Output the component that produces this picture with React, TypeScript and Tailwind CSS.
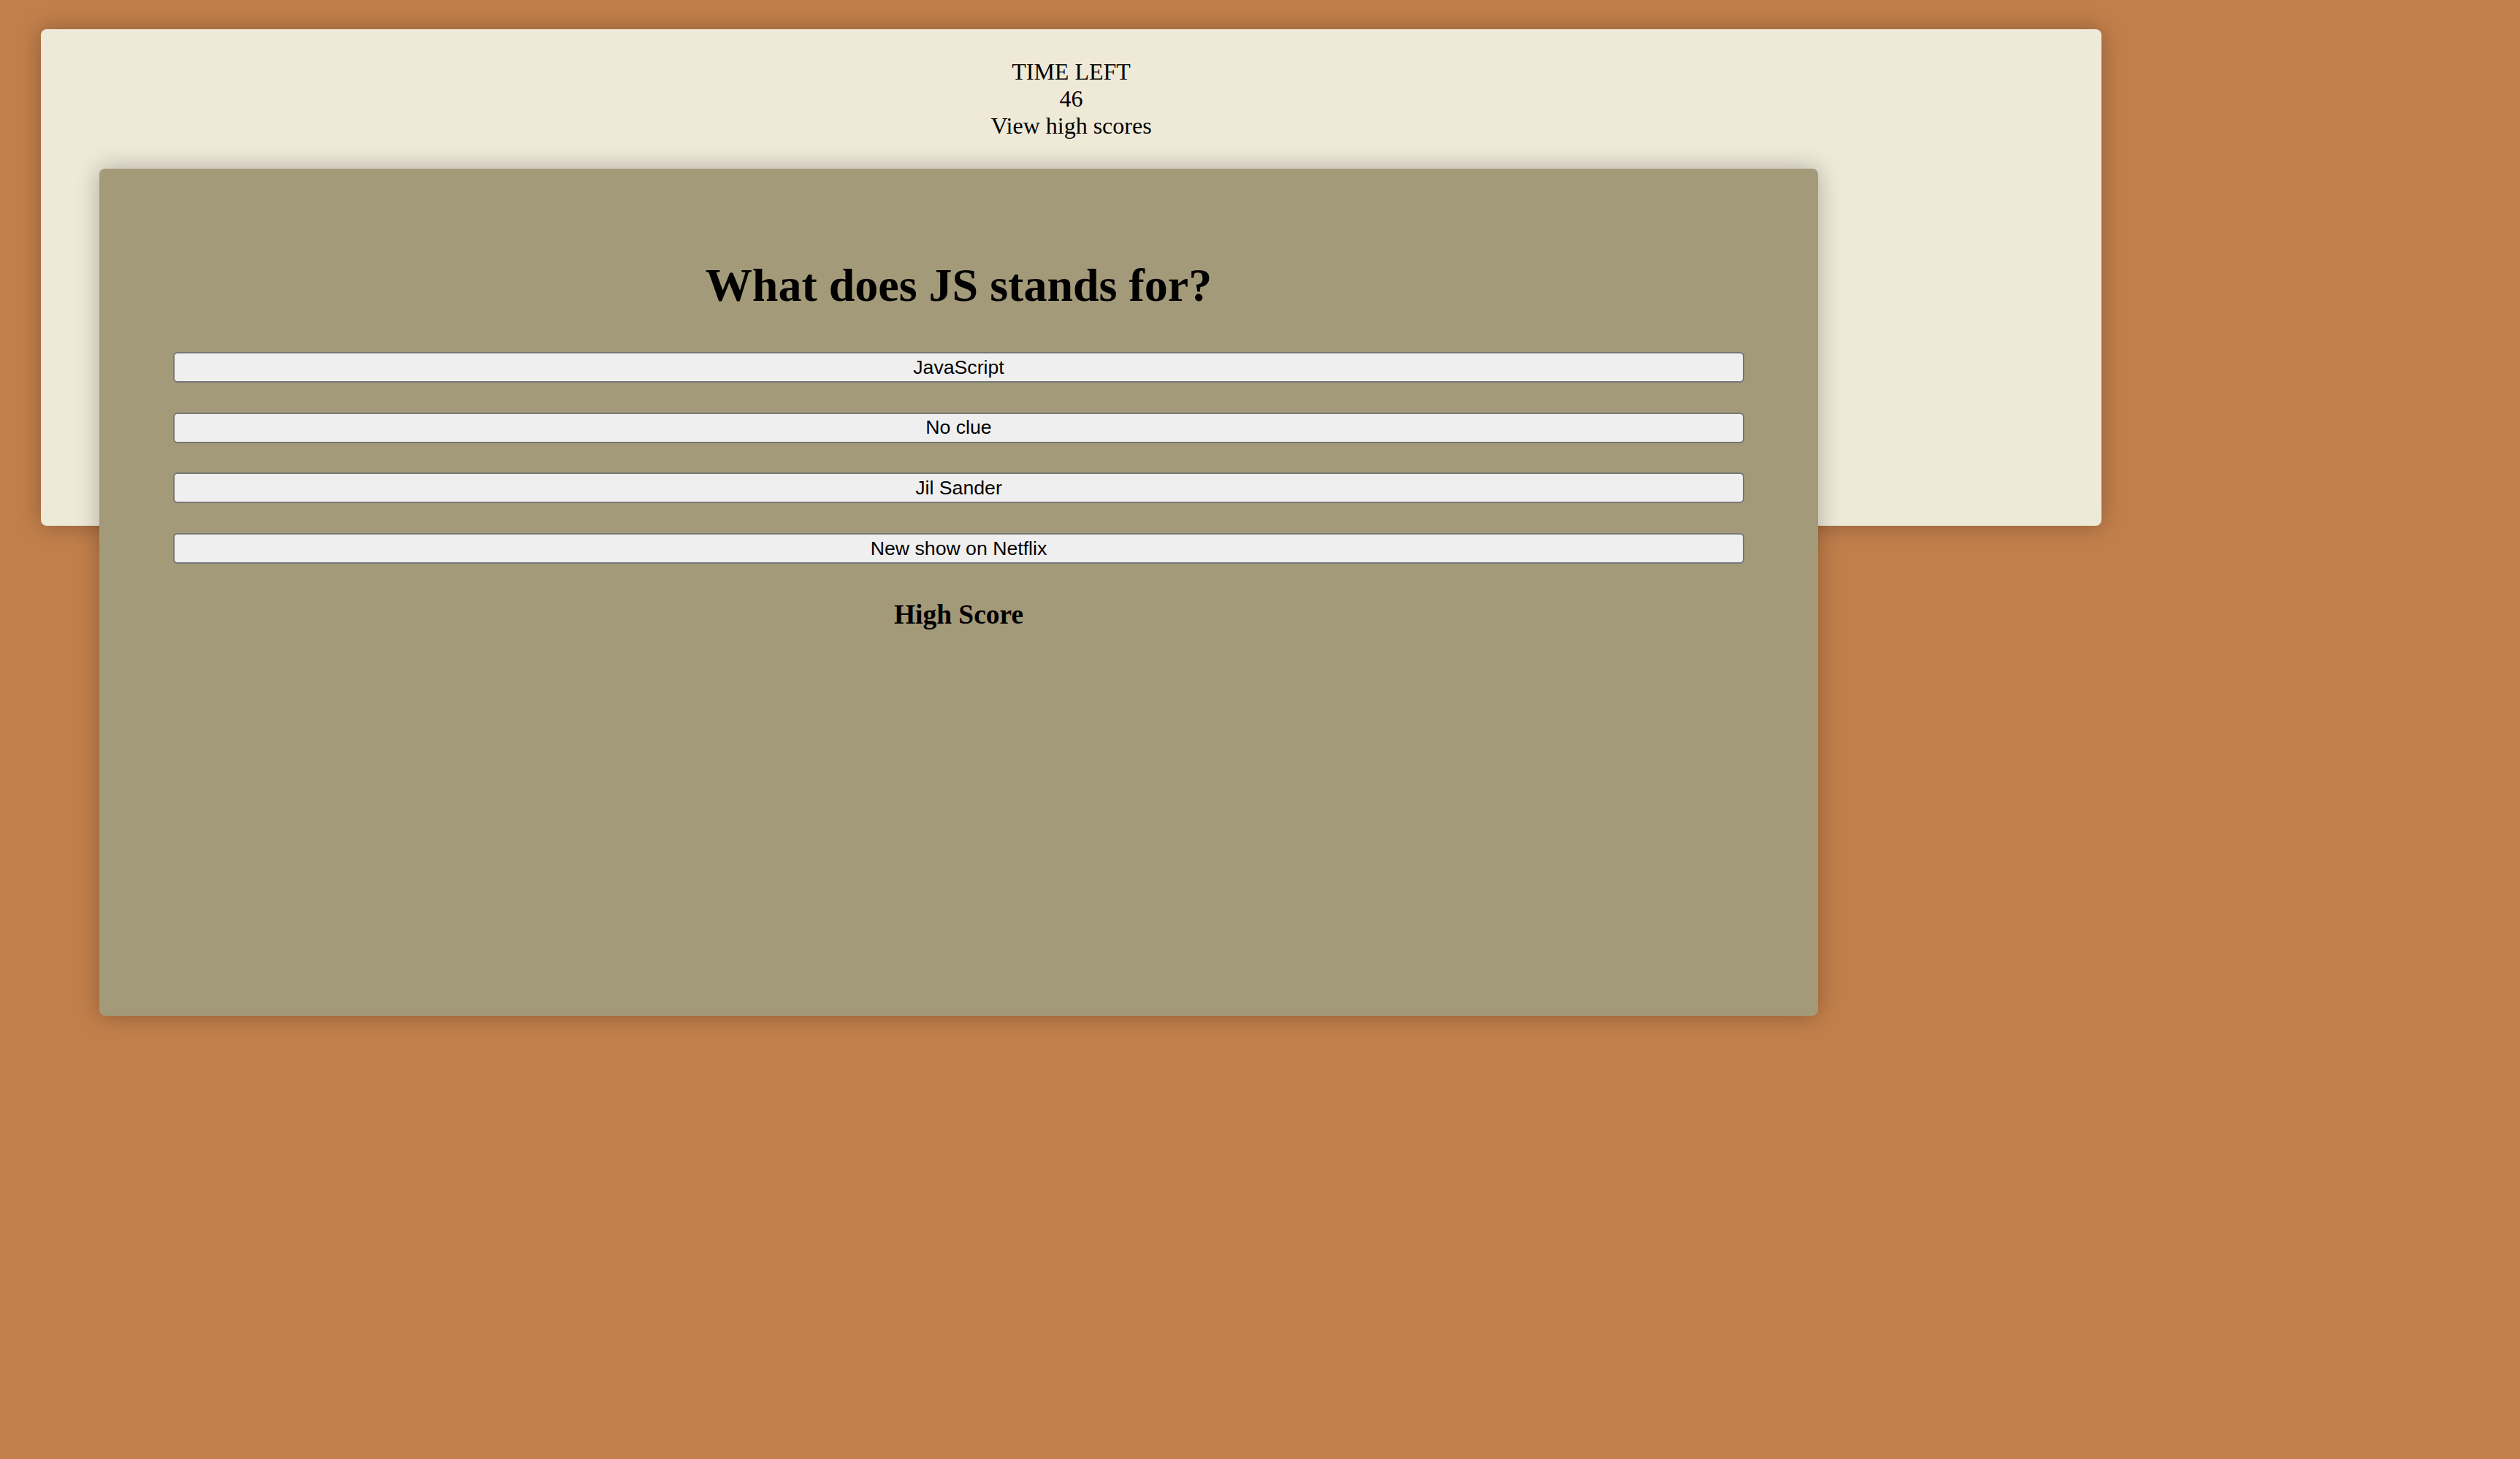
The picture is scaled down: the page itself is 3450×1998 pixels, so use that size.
import React from "react";

export default function App() {
  const answers = ["JavaScript", "No clue", "Jil Sander", "New show on Netflix"];
  return (
    <div className="w-full min-h-[1998px] bg-[#C27F4B] pt-[40px] pl-[56px] font-['Liberation_Serif',serif] text-black">
      <div className="w-[2821px] h-[680px] bg-[#EFE9D8] rounded-[8px] shadow-[0_0_32px_rgba(0,0,0,0.28)] pt-[40px]">
        <div className="text-center text-[32px] leading-[37px]">
          <div>TIME LEFT</div>
          <div>46</div>
          <div>View high scores</div>
        </div>
        <div className="ml-[80px] mt-[40px] w-[2353px] h-[1160px] bg-[#A39A79] rounded-[8px] shadow-[0_0_32px_rgba(0,0,0,0.28)] pt-[123px] px-[101px]">
          <h1 className="text-center text-[64px] leading-[74px] font-bold">What does JS stands for?</h1>
          <div className="mt-[54px] flex flex-col gap-[40.67px]">
            {answers.map((a) => (
              <button
                key={a}
                className="h-[42px] w-full flex items-center justify-center bg-[#EFEFEF] border-2 border-[#767676] rounded-[6px] font-['Liberation_Sans',Arial,sans-serif] text-[26.67px] leading-none text-black"
              >
                {a}
              </button>
            ))}
          </div>
          <h3 className="mt-[48px] text-center text-[37.44px] leading-[43px] font-bold">High Score</h3>
        </div>
      </div>
    </div>
  );
}
